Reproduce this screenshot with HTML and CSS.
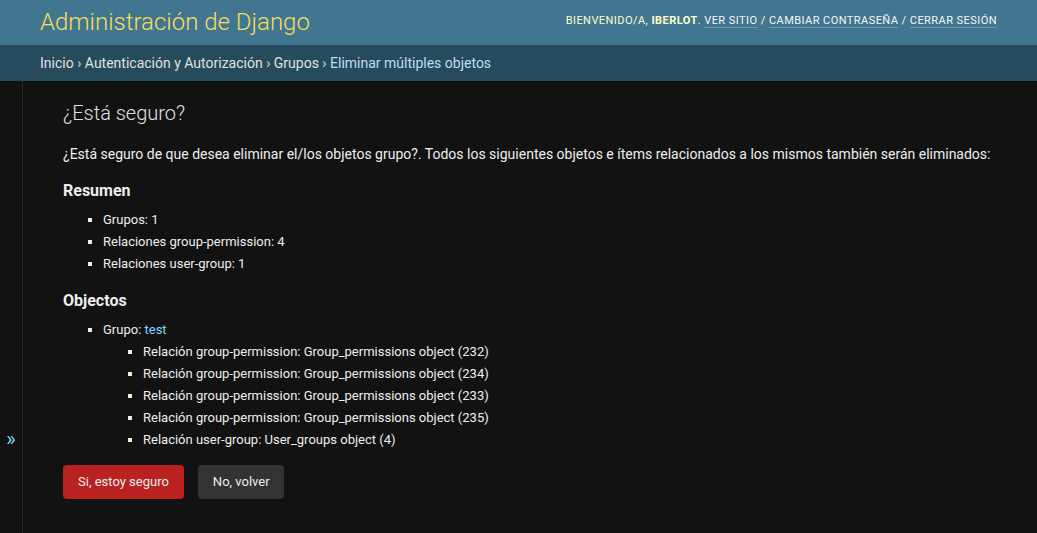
FILE: index.html
```html
<!DOCTYPE html>
<html lang="es">
<head>
<meta charset="utf-8">
<title>Eliminar múltiples objetos</title>
<link rel="stylesheet" href="styles.css">
</head>
<body>
<div class="container">
  <header class="header">
    <div class="branding"><h1 class="site-name">Administración de Django</h1></div>
    <div class="user-tools">Bienvenido/a, <strong>iberlot</strong>. <a href="#">Ver sitio</a> / <a href="#">Cambiar contraseña</a> / <a href="#">Cerrar sesión</a></div>
  </header>
  <nav class="breadcrumbs"><a href="#">Inicio</a> › <a href="#">Autenticación y Autorización</a> › <a href="#">Grupos</a> › Eliminar múltiples objetos</nav>
  <div class="main">
    <button class="toggle-nav" type="button">»</button>
    <div class="content">
      <h1 class="title">¿Está seguro?</h1>
      <p class="intro">¿Está seguro de que desea eliminar el/los objetos grupo?. Todos los siguientes objetos e ítems relacionados a los mismos también serán eliminados:</p>
      <h2 class="section">Resumen</h2>
      <ul class="list">
        <li>Grupos: 1</li>
        <li>Relaciones group-permission: 4</li>
        <li>Relaciones user-group: 1</li>
      </ul>
      <h2 class="section">Objectos</h2>
      <ul class="list">
        <li>Grupo: <a class="link" href="#">test</a>
          <ul class="list nested">
            <li>Relación group-permission: Group_permissions object (232)</li>
            <li>Relación group-permission: Group_permissions object (234)</li>
            <li>Relación group-permission: Group_permissions object (233)</li>
            <li>Relación group-permission: Group_permissions object (235)</li>
            <li>Relación user-group: User_groups object (4)</li>
          </ul>
        </li>
      </ul>
      <div class="actions">
        <button class="btn btn-delete" type="button">Si, estoy seguro</button>
        <a class="btn btn-cancel" href="#">No, volver</a>
      </div>
    </div>
  </div>
</div>
</body>
</html>
```
FILE: styles.css
```css
* { box-sizing: border-box; }
html, body { margin: 0; padding: 0; }
body {
  background: #121212;
  color: #eeeeee;
  font-family: Roboto, "Liberation Sans", Arial, sans-serif;
  font-size: 14px;
  height: 533px;
  overflow: hidden;
}
a { text-decoration: none; }

.header {
  display: flex;
  justify-content: space-between;
  align-items: center;
  padding: 10px 40px;
  background: #417690;
  color: #ffffcc;
  height: 45px;
}
.site-name {
  margin: 0;
  font-weight: 300;
  font-size: 24px;
  line-height: 25px;
  color: #f5dd5d;
}
.user-tools {
  font-weight: 400;
  font-size: 11px;
  letter-spacing: 0.45px;
  text-transform: uppercase;
  color: #ffffcc;
  margin-top: -4px;
}
.user-tools strong { font-weight: 700; }
.user-tools a {
  color: #f7f7f7;
  border-bottom: 1px solid rgba(255,255,255,0.25);
}

.breadcrumbs {
  background: #264b5d;
  padding: 10px 40px;
  height: 36px;
  line-height: 16px;
  color: #c4dce8;
  font-size: 14px;
}
.breadcrumbs a { color: #e0e0e0; }

.main {
  display: flex;
  height: 452px;
}
.toggle-nav {
  flex: 0 0 23px;
  width: 23px;
  background: transparent;
  border: 0;
  border-right: 1px solid #272727;
  color: #81d4fa;
  font-family: Roboto, "Liberation Sans", Arial, sans-serif;
  font-size: 20px;
  font-weight: 400;
  padding: 344px 0 0 0;
  display: flex;
  justify-content: center;
  align-items: flex-start;
  line-height: 28px;
}
.content {
  flex: 1;
  padding: 20px 40px;
}
.title {
  margin: 0 0 20px;
  font-weight: 300;
  font-size: 20px;
  line-height: 24px;
  color: #e0e0e0;
}
.intro {
  margin: 2.8px 0 11.2px;
  line-height: 19.6px;
}
.section {
  font-size: 16px;
  font-weight: 700;
  margin: 16px 0 8px;
  line-height: 20px;
  color: #eeeeee;
}
.list {
  margin: 0;
  padding: 0 0 0 40px;
}
.list li {
  list-style-type: square;
  font-size: 13px;
  line-height: 20px;
  padding: 1px 0;
}
.nested { margin: 1px 0 0; }
.link { color: #81d4fa; }

.actions {
  display: flex;
  align-items: center;
  gap: 14px;
  margin-top: 13px;
}
.btn {
  display: inline-block;
  font-family: Roboto, "Liberation Sans", Arial, sans-serif;
  font-size: 13px;
  font-weight: 400;
  line-height: 14px;
  padding: 10px 15px;
  height: 34px;
  border: 0;
  border-radius: 4px;
  color: #eeeeee;
}
.btn-delete { background: #ba2121; }
.btn-cancel { background: #333333; padding: 10px 14px 10px 15px; }
```
